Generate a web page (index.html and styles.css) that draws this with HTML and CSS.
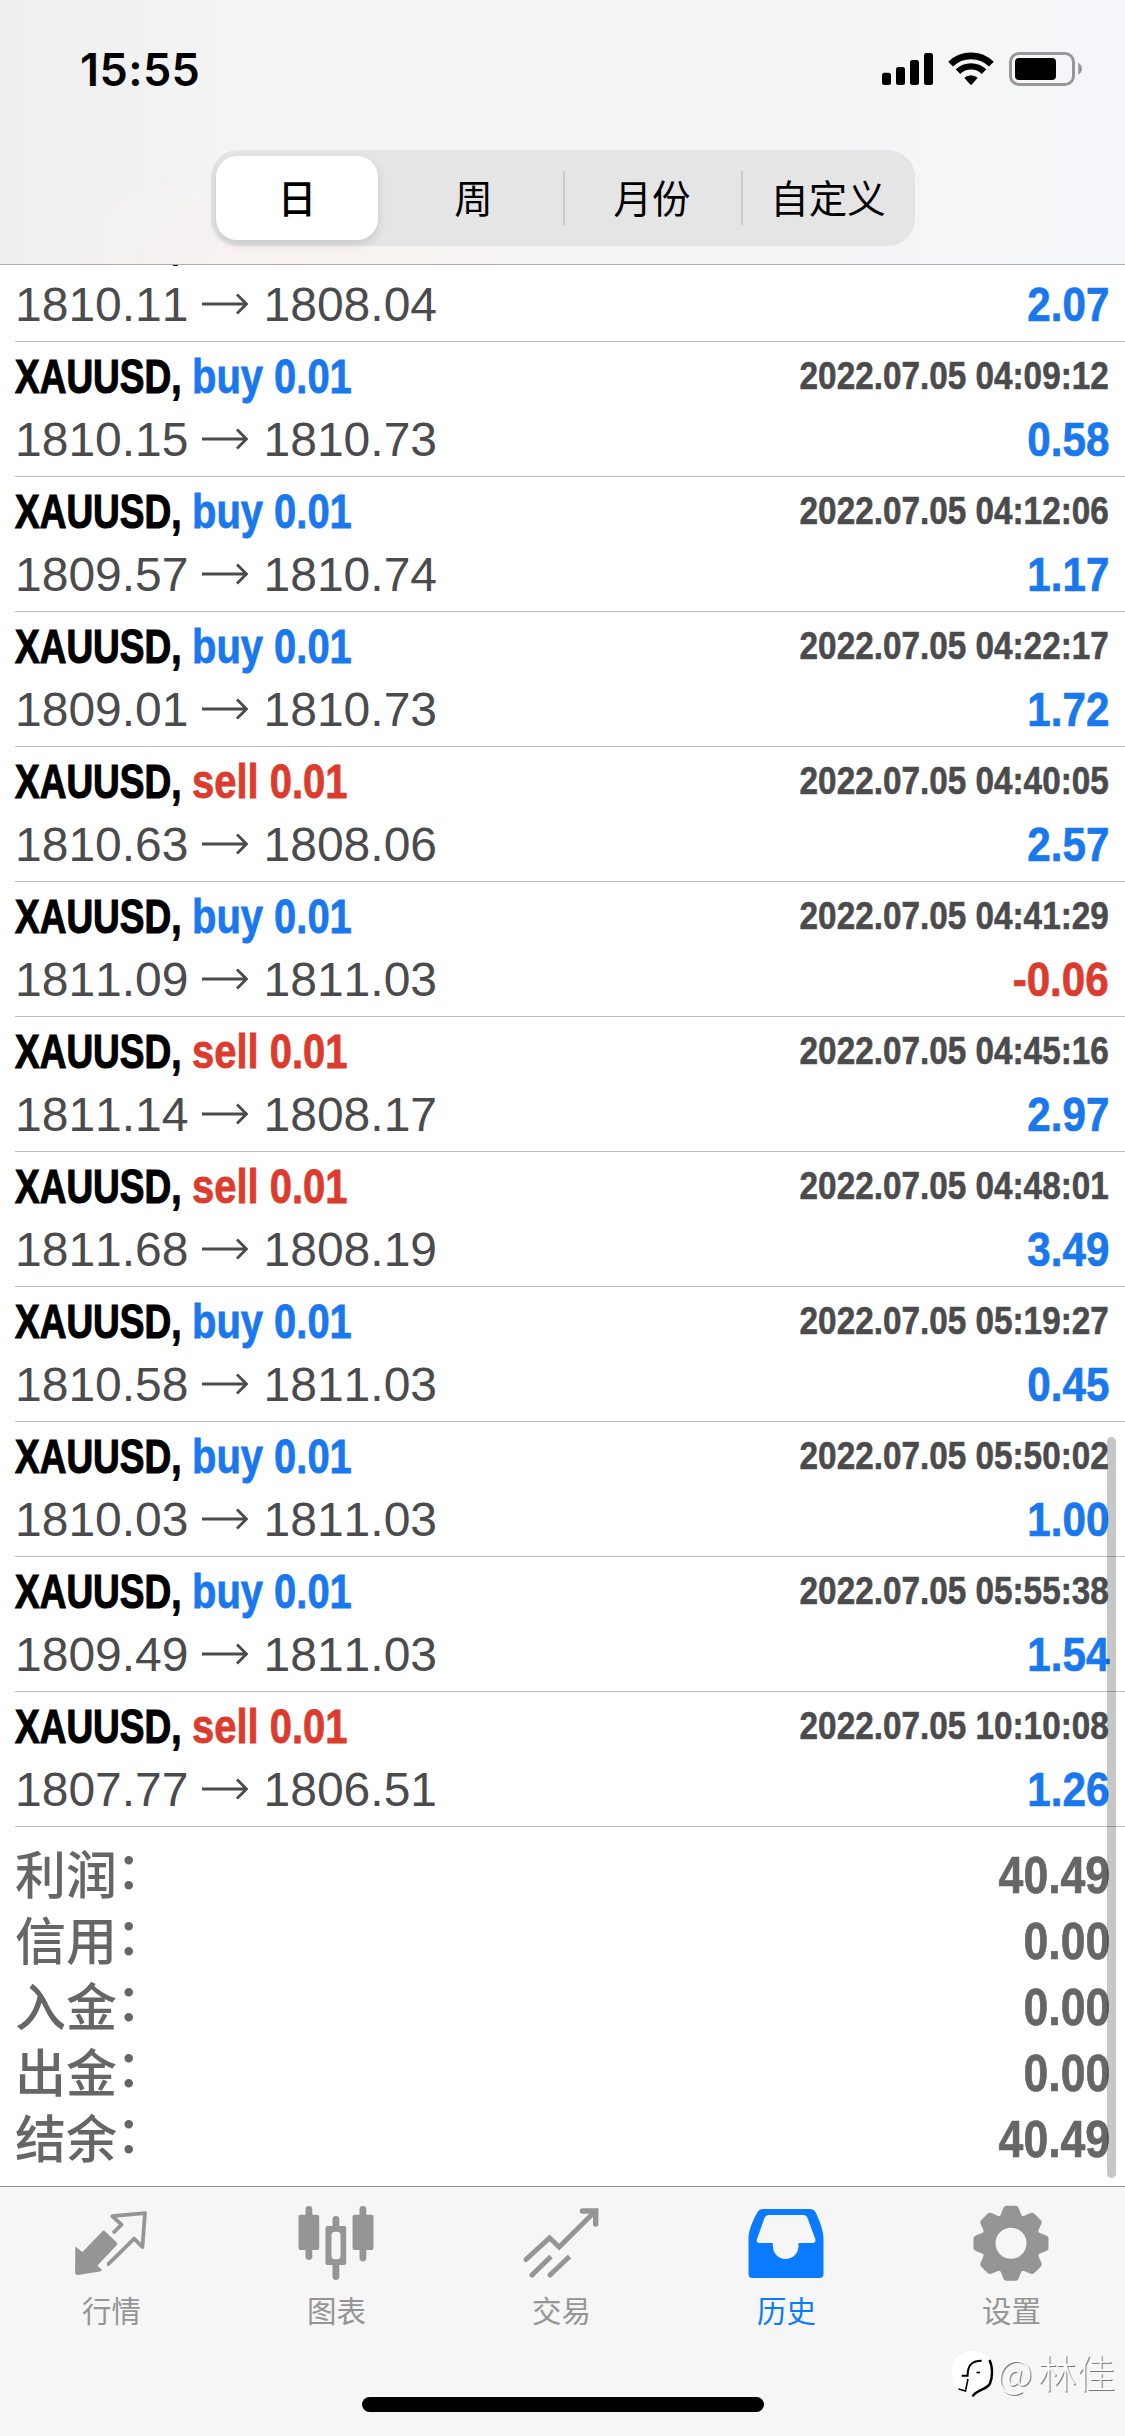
FILE: index.html
```html
<!DOCTYPE html>
<html lang="zh-CN">
<head>
<meta charset="utf-8">
<title>历史</title>
<link rel="stylesheet" href="styles.css">
</head>
<body>
<div class="screen">
  <header class="header">
    <div class="status">
      <span class="clock">15:55</span>
      <svg class="status-icons" viewBox="0 0 240 80" width="240" height="80">
        <rect x="22" y="42.7" width="9" height="12.3" rx="2.5"/>
        <rect x="36" y="37" width="9" height="18" rx="2.5"/>
        <rect x="50" y="30" width="9" height="25" rx="2.5"/>
        <rect x="64" y="23" width="9" height="32" rx="2.5"/>
        <path d="M90.6 34.1A29.2 29.2 0 0 1 131.4 34.1" fill="none" stroke="#000" stroke-width="6.8"/>
        <path d="M98 41.6A18.8 18.8 0 0 1 124 41.6" fill="none" stroke="#000" stroke-width="6.4"/>
        <path d="M104.3 47.8A10 10 0 0 1 117.7 47.8L111.8 54.4Q111 55.2 110.2 54.4Z"/>
        <rect x="150.5" y="23.5" width="63" height="31" rx="8.5" fill="none" stroke="#97979a" stroke-width="3"/>
        <rect x="155" y="28" width="41" height="22" rx="4"/>
        <path d="M218.3 32.7Q222 35 222 38.7T218.3 44.7Z" fill="#97979a"/>
      </svg>
    </div>
    <nav class="segments">
      <span class="segment selected">日</span>
      <span class="segment">周</span>
      <span class="segment divided">月份</span>
      <span class="segment divided">自定义</span>
    </nav>
  </header>

  <main class="history">
    <div class="deals" id="deals"></div>
    <dl class="totals">
      <div class="total"><dt>利润<i>：</i></dt><dd>40.49</dd></div>
      <div class="total"><dt>信用<i>：</i></dt><dd>0.00</dd></div>
      <div class="total"><dt>入金<i>：</i></dt><dd>0.00</dd></div>
      <div class="total"><dt>出金<i>：</i></dt><dd>0.00</dd></div>
      <div class="total"><dt>结余<i>：</i></dt><dd>40.49</dd></div>
    </dl>
    <div class="scrollbar"></div>
  </main>

  <footer class="tabbar">
    <nav class="tabs">
      <div class="tab">
        <svg class="tab-icon" viewBox="0 0 76 76">
          <path d="M1.3 40.5L8.4 46L28.5 25.2Q29.8 24 31 25.2L42.8 36.4Q44 37.6 42.8 39L23.5 59.5L28 64Q27.6 65 26 65.4L4 69Q1.3 69 1.1 66.5Z" fill="currentColor"/>
          <path d="M39 27.2L47.5 18.6L38.2 10.2L71 7.2L68.4 41L60.2 32.6L34.5 58H33" fill="none" stroke="currentColor" stroke-width="3.8" stroke-linejoin="round"/>
        </svg>
        <span>行情</span>
      </div>
      <div class="tab">
        <svg class="tab-icon" viewBox="0 0 76 76" fill="currentColor">
          <rect x="6.5" y="0" width="6.8" height="54" rx="3.4"/>
          <rect x="-.5" y="8.7" width="20.7" height="35.3" rx="2"/>
          <rect x="60.5" y="0" width="6.8" height="55.5" rx="3.4"/>
          <rect x="53.5" y="8.7" width="21" height="35.3" rx="2"/>
          <rect x="33.5" y="10" width="6.8" height="64" rx="3.4"/>
          <rect x="26.5" y="20" width="20.7" height="39" rx="2"/>
          <rect x="32.5" y="25.7" width="9" height="27.6" rx="3.5" fill="#f6f6f6"/>
        </svg>
        <span>图表</span>
      </div>
      <div class="tab">
        <svg class="tab-icon" viewBox="0 0 76 76" fill="none" stroke="currentColor" stroke-width="5">
          <path d="M2 53.5L25.5 31.8L35.2 41L71 5.5" stroke-linecap="round"/>
          <path d="M58.5 5H71.7V18" stroke-width="5.4" stroke-linecap="round"/>
          <path d="M8 69L27 50.5M26 69L45.5 50.5"/>
          <path d="M8 69h.1M26 69h.1" stroke-linecap="round"/>
        </svg>
        <span>交易</span>
      </div>
      <div class="tab active">
        <svg class="tab-icon" viewBox="0 0 76 76">
          <path fill="currentColor" fill-rule="evenodd" d="M14 3H61Q65 3 67 7C72 18 74.5 26 74.5 33V68Q74.5 72 70.5 72H3.5Q-.5 72 -.5 68V33C-.5 26 2 18 8 7Q10 3 14 3ZM20 9Q17 9 15.5 12L8 33Q7 37 10 37H23.8V40C24 48 30 53 36.7 53S49.3 48 49.5 40V37H64Q67 37 66.3 33L58.5 12Q57.5 9 54 9Z"/>
        </svg>
        <span>历史</span>
      </div>
      <div class="tab">
        <svg class="tab-icon" viewBox="0 0 76 76">
          <defs><path id="tooth" d="M-12 -26Q-9.6 -29 -8.2 -34Q-7 -37.5 -4.8 -37.5H4.8Q7 -37.5 8.2 -34Q9.6 -29 12 -26Z"/></defs>
          <g transform="translate(37 37.3)" fill="currentColor">
            <circle r="22.5" fill="none" stroke="currentColor" stroke-width="14"/>
            <use href="#tooth"/><use href="#tooth" transform="rotate(45)"/><use href="#tooth" transform="rotate(90)"/><use href="#tooth" transform="rotate(135)"/>
            <use href="#tooth" transform="rotate(180)"/><use href="#tooth" transform="rotate(225)"/><use href="#tooth" transform="rotate(270)"/><use href="#tooth" transform="rotate(315)"/>
          </g>
        </svg>
        <span>设置</span>
      </div>
    </nav>
    <div class="home-indicator"></div>
    <div class="watermark">
      <svg viewBox="0 0 50 52" width="50" height="52">
        <path d="M22 2C35 2 42 10 42 22S35 41 25 43L21 47V42H8C4 38 2 32 2 22C2 10 9 2 22 2Z" fill="#fff"/>
        <g fill="none" stroke="#000">
          <path d="M11.7 26.7H17.6C17.6 17 21 11.8 31.7 11.7" stroke-width="2"/>
          <path d="M18 30L15.5 42L8.5 40" stroke-width="1.6"/>
          <path d="M39.5 11C43 18 42.6 29 39.8 35C36 41 25.5 41 22.6 47.5" stroke-width="2.4"/>
          <path d="M26.5 23.5H30" stroke-width="1.6"/>
        </g>
      </svg>
      <span><b>@</b>林佳</span>
    </div>
  </footer>
</div>
<script src="deals.js"></script>
</body>
</html>
```
FILE: styles.css
```css
* { box-sizing: border-box; }

body {
  margin: 0;
  background: #fff;
  font-family: "Liberation Sans", "Noto Sans CJK SC", sans-serif;
  font-kerning: none;
}

.screen {
  display: flex;
  flex-direction: column;
  width: 1125px;
  height: 2436px;
  overflow: hidden;
  background: #fff;
}

/* header */
.header {
  position: relative;
  z-index: 2;
  flex: none;
  height: 265px;
  border-bottom: 1px solid #acacac;
  background:
    radial-gradient(ellipse 240px 110px at 290px 265px, rgba(255, 240, 240, .5), rgba(255, 240, 240, 0)),
    linear-gradient(90deg, #efefef 0, #f2f1f1 130px, #f5f4f4 240px, #f5f5f6 800px, #f5f6f9 1125px);
}

.status {
  display: flex;
  justify-content: space-between;
  height: 150px;
  padding: 30px 25px 0 80px;
}

.clock {
  font: 600 45px/80px Inter, sans-serif;
  letter-spacing: .4px;
}

.segments {
  display: grid;
  grid-template-columns: 169px 179px 178px 174px;
  width: 704px;
  height: 96px;
  margin-left: 211px;
  padding: 6px 4px;
  border-radius: 27px;
  background: #e5e5e6;
}

.segment {
  display: flex;
  align-items: center;
  justify-content: center;
  height: 84px;
  padding-bottom: 4px;
  font: 400 38.5px/80px "Noto Sans CJK SC", sans-serif;
  color: #000;
}

.segment.selected {
  width: 162px;
  margin-left: 1px;
  border-radius: 21px;
  background: #fff;
  box-shadow: 0 4px 10px rgba(0, 0, 0, .13);
  font-weight: 500;
}

.segment.divided {
  background: linear-gradient(#cbcbcd, #cbcbcd) 0 50% / 2px 54px no-repeat;
}

/* deals */
.history {
  position: relative;
  flex: none;
  height: 1921px;
}

.deals { margin-top: -58px; }

.deal {
  height: 135px;
  margin-left: 15px;
  padding: 4px 16px 0 0;
  border-bottom: 1px solid #bdbdbf;
}

.line {
  display: flex;
  white-space: nowrap;
}

.line.title {
  height: 60px;
  font-size: 49px;
  font-weight: 700;
  line-height: 60px;
}

.symbol {
  width: 177px;
  transform: scaleX(.755);
  transform-origin: 0 50%;
  -webkit-text-stroke: 1.2px;
}

.side {
  transform: scaleX(.815);
  transform-origin: 0 50%;
  -webkit-text-stroke: .8px;
}

.blue { color: #1a78ee; }
.red { color: #dc3b2e; }

.date {
  margin-left: auto;
  color: #4b4b4d;
  font-size: 39.5px;
  line-height: 58px;
  transform: scaleX(.843);
  transform-origin: 100% 50%;
  -webkit-text-stroke: .6px;
}

.line.result {
  height: 66px;
  line-height: 67px;
}

.price {
  color: #4b4b4d;
  font-size: 48px;
}

.arrow {
  flex: none;
  align-self: flex-start;
  width: 46px;
  height: 24px;
  margin: 21px 16px 0 13px;
}

.profit {
  margin-left: auto;
  font-size: 49px;
  font-weight: 700;
  line-height: 66px;
  transform: scaleX(.86);
  transform-origin: 100% 50%;
  -webkit-text-stroke: .7px;
}

/* totals */
.totals {
  margin: 0;
  padding: 15px 15px 0;
}

.total {
  display: flex;
  justify-content: space-between;
  height: 66px;
  color: #666;
}

.total dt {
  font: 500 51px/60px "Noto Sans CJK SC", sans-serif;
}

.total dt i {
  position: relative;
  top: -5px;
  left: -1px;
  font-style: normal;
}

.total dd {
  margin: 0;
  font-size: 52px;
  font-weight: 700;
  line-height: 66px;
  transform: scaleX(.857);
  transform-origin: 100% 50%;
  -webkit-text-stroke: .7px;
}

.scrollbar {
  position: absolute;
  top: 1172px;
  right: 9px;
  width: 9px;
  height: 741px;
  border-radius: 5px;
  background: rgba(0, 0, 0, .22);
}

/* tab bar */
.tabbar {
  position: relative;
  flex: none;
  display: flex;
  flex-direction: column;
  align-items: center;
  height: 250px;
  border-top: 1px solid #8e8e8e;
  background: #f6f6f6;
}

.tabs {
  display: grid;
  grid-template-columns: repeat(5, 225px);
  height: 210px;
  padding-top: 19px;
}

.tab {
  display: flex;
  flex-direction: column;
  align-items: center;
  color: #959595;
  font: 400 29.5px/44px "Noto Sans CJK SC", sans-serif;
}

.tab span {
  margin-top: 5px;
  margin-right: 2px;
}

.tab.active { color: #0a7aff; }

.tab-icon {
  position: relative;
  left: -1px;
  width: 76px;
  height: 76px;
  overflow: visible;
}

.home-indicator {
  width: 402px;
  height: 15px;
  border-radius: 8px;
  background: #000;
}

.watermark {
  position: absolute;
  left: 950px;
  top: 162px;
  display: flex;
  color: #fcfcfc;
  font: 300 38.5px/44px "Noto Sans CJK SC", sans-serif;
  white-space: nowrap;
  text-shadow: 1px 1px 0 #777;
}

.watermark b {
  display: inline-block;
  width: 41px;
  font-size: 39px;
  font-weight: 300;
}

.watermark svg { margin-right: -3px; }
```
FILE: deals.js
```js
const deals = [
  ["buy", "2022.07.05 04:05:33", "1810.11", "1808.04", "2.07"],
  ["buy", "2022.07.05 04:09:12", "1810.15", "1810.73", "0.58"],
  ["buy", "2022.07.05 04:12:06", "1809.57", "1810.74", "1.17"],
  ["buy", "2022.07.05 04:22:17", "1809.01", "1810.73", "1.72"],
  ["sell", "2022.07.05 04:40:05", "1810.63", "1808.06", "2.57"],
  ["buy", "2022.07.05 04:41:29", "1811.09", "1811.03", "-0.06"],
  ["sell", "2022.07.05 04:45:16", "1811.14", "1808.17", "2.97"],
  ["sell", "2022.07.05 04:48:01", "1811.68", "1808.19", "3.49"],
  ["buy", "2022.07.05 05:19:27", "1810.58", "1811.03", "0.45"],
  ["buy", "2022.07.05 05:50:02", "1810.03", "1811.03", "1.00"],
  ["buy", "2022.07.05 05:55:38", "1809.49", "1811.03", "1.54"],
  ["sell", "2022.07.05 10:10:08", "1807.77", "1806.51", "1.26"],
];

const arrow = `<svg class="arrow" viewBox="0 0 46 24"><path d="M0 12H44M35 2.5L44.5 12L35 21.5" fill="none" stroke="#4b4b4d" stroke-width="2.8"/></svg>`;

document.getElementById("deals").innerHTML = deals.map(([side, date, open, close, profit], i) => `
  <div class="deal">
    <div class="line title">
      <span class="symbol">XAUUSD,</span>
      ${i ? `<span class="side ${side === "buy" ? "blue" : "red"}">${side} 0.01</span><span class="date">${date}</span>` : ""}
    </div>
    <div class="line result">
      <span class="price">${open}</span>${arrow}<span class="price">${close}</span>
      <span class="profit ${profit.startsWith("-") ? "red" : "blue"}">${profit}</span>
    </div>
  </div>`).join("");
```
